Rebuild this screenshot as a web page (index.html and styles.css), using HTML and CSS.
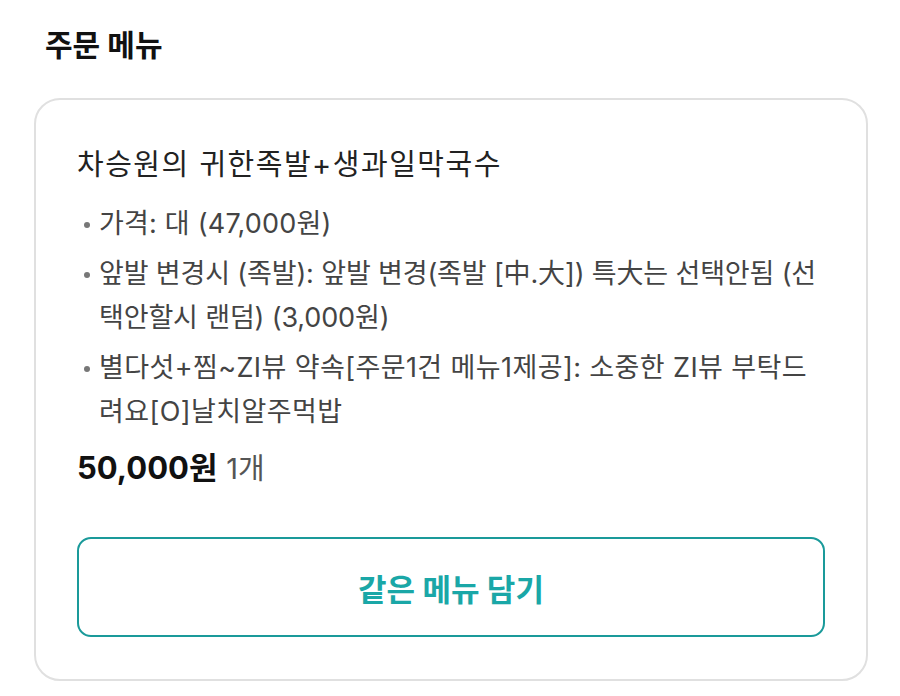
FILE: index.html
```html
<!DOCTYPE html>
<html lang="ko">
<head>
  <meta charset="UTF-8">
  <title>주문 메뉴</title>
  <link rel="stylesheet" href="styles.css">
</head>
<body>

<!-- 주문 메뉴 -->
<section class="order">
  <h2 class="order-title">주문 메뉴</h2>

  <div class="menu-card">
    <h3 class="menu-name">차승원의 귀한족발+생과일막국수</h3>
    <ul class="options">
      <li>가격: 대 (47,000원)</li>
      <li class="tight">앞발 변경시 (족발): 앞발 변경(족발 [中.大]) 특大는 선택안됨 (선택안할시 랜덤) (3,000원)</li>
      <li class="loose">별다섯+찜~ZI뷰 약속[주문1건 메뉴1제공]: 소중한 ZI뷰 부탁드려요[O]날치알주먹밥</li>
    </ul>
    <p class="price"><strong>50,000원</strong> <span class="qty">1개</span></p>
    <button class="again-btn">같은 메뉴 담기</button>
  </div>
</section>

</body>
</html>
```

FILE: styles.css
```css
* { box-sizing: border-box; }
body {
  margin: 0;
  background: #fff;
  font-family: Inter, "Noto Sans CJK KR", "Noto Sans", sans-serif;
  color: #222;
}
.order {
  padding: 22px 32px 0 34px;
}
.order-title {
  margin: 0 0 30px 11px;
  font-size: 30px;
  font-weight: 700;
  line-height: 46px;
  color: #111;
}
.menu-card {
  border: 2px solid #e0e0e0;
  border-radius: 26px;
  padding: 40px 41px 42px 41px;
}
.menu-name {
  margin: 0 0 12px;
  font-size: 29px;
  font-weight: 400;
  line-height: 50px;
  letter-spacing: 1.5px;
  color: #222;
}
.options {
  margin: 0;
  padding: 0 0 0 22px;
  list-style: none;
}
.options li {
  position: relative;
  font-size: 27px;
  line-height: 44px;
  letter-spacing: 0.2px;
  color: #444;
  margin-bottom: 6px;
}
.options li.tight { letter-spacing: -0.15px; }
.options li.loose { letter-spacing: 0.4px; }
.options li::before {
  content: "";
  position: absolute;
  left: -15px;
  top: 20px;
  width: 6px;
  height: 6px;
  border-radius: 50%;
  background: #777;
}
.price {
  margin: 12px 0 46px;
  font-size: 31px;
  line-height: 44px;
  color: #111;
}
.price strong { font-weight: 700; }
.qty {
  color: #555;
  font-size: 29px;
}
.again-btn {
  display: block;
  width: 100%;
  height: 100px;
  background: #fff;
  border: 2px solid #1a9a9a;
  border-radius: 14px;
  font-family: inherit;
  font-size: 31px;
  font-weight: 700;
  color: #1aa7a7;
  cursor: pointer;
}
```
